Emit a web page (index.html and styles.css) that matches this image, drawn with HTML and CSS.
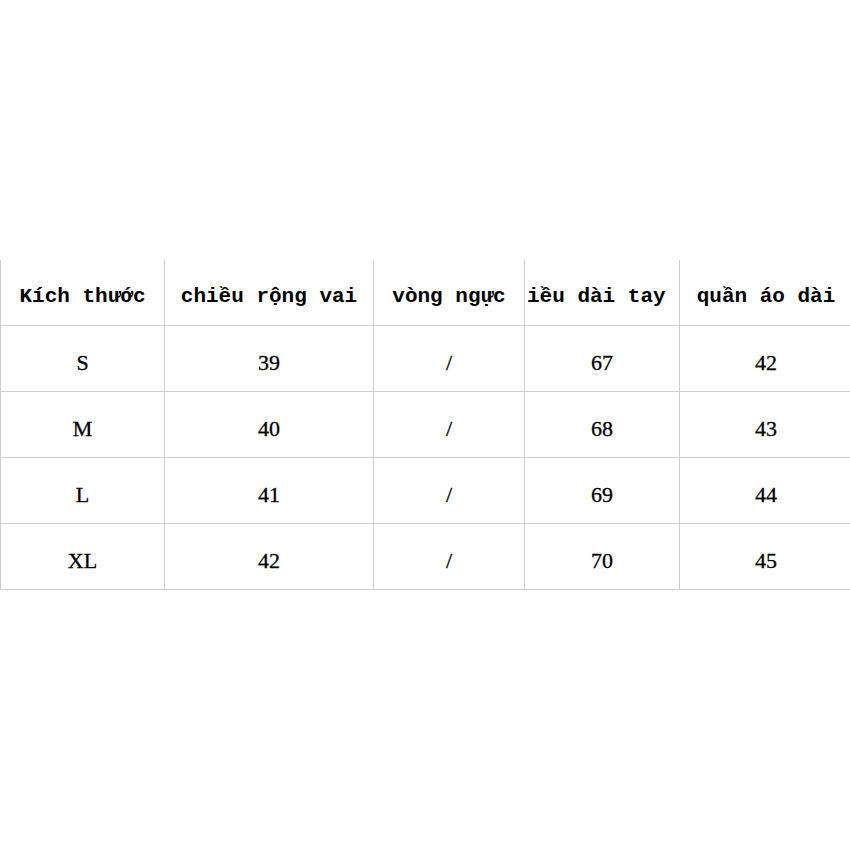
FILE: index.html
```html
<!DOCTYPE html>
<html>
<head>
<meta charset="utf-8">
<link rel="stylesheet" href="styles.css">
</head>
<body>
<div class="page">
<table class="size-table">
<colgroup>
<col class="c1"><col class="c2"><col class="c3"><col class="c4"><col class="c5">
</colgroup>
<thead>
<tr><th>Kích thước</th><th>chiều rộng vai</th><th>vòng ngực</th><th class="clip">iều dài tay</th><th>quần áo dài</th></tr>
</thead>
<tbody>
<tr><td>S</td><td>39</td><td>/</td><td>67</td><td>42</td></tr>
<tr><td>M</td><td>40</td><td>/</td><td>68</td><td>43</td></tr>
<tr><td>L</td><td>41</td><td>/</td><td>69</td><td>44</td></tr>
<tr><td>XL</td><td>42</td><td>/</td><td>70</td><td>45</td></tr>
</tbody>
</table>
</div>
</body>
</html>
```
FILE: styles.css
```css
html, body {
  margin: 0;
  padding: 0;
  background: #fff;
  overflow: hidden;
}
.page {
  width: 850px;
  height: 850px;
  padding-top: 260px;
  box-sizing: border-box;
  overflow: hidden;
}
.size-table {
  border-collapse: collapse;
  table-layout: fixed;
  width: 852px;
  color: #000;
}
.c1 { width: 164px; }
.c2 { width: 209px; }
.c3 { width: 151px; }
.c4 { width: 155px; }
.c5 { width: 173px; }
.size-table th,
.size-table td {
  border: 1px solid #c9ccd9;
  text-align: center;
  vertical-align: middle;
  padding: 8px 0 0 0;
  white-space: nowrap;
  overflow: hidden;
}
.size-table th {
  border-top: none;
  height: 57px;
  font-family: "Liberation Mono", "DejaVu Sans Mono", monospace;
  font-size: 21px;
  font-weight: bold;
}
.size-table th.clip {
  text-align: left;
  padding-left: 2px;
}
.size-table td {
  height: 57px;
  font-family: "Liberation Serif", "DejaVu Serif", serif;
  font-size: 22px;
  -webkit-text-stroke: 0.3px #000;
}
```
